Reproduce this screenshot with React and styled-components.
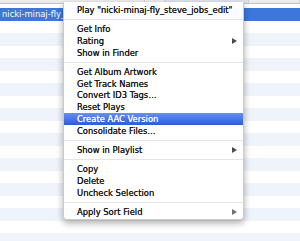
import styled, { createGlobalStyle } from 'styled-components'

const GlobalStyle = createGlobalStyle`
  html, body {
    margin: 0;
    padding: 0;
    background: #fff;
    overflow: hidden;
  }
  body {
    font-family: "DejaVu Sans", "Liberation Sans", sans-serif;
  }
`

const Page = styled.div`
  position: relative;
  width: 300px;
  height: 241px;
  overflow: hidden;
  background: #fff;
`

const Header = styled.div`
  display: flex;
  height: 17px;
  margin-top: -14px;
  background: linear-gradient(#ffffff, #e9e9e9);
  border-bottom: 1px solid #c4c4c4;
`

const HeaderCell = styled.div`
  width: ${props => props.w};
  flex: ${props => (props.grow ? 1 : 'none')};
  padding-left: ${props => props.pl || '2px'};
  font-size: 8.4px;
  line-height: 17px;
  color: #333;
  text-align: ${props => props.align || 'left'};
  padding-right: ${props => props.pr || '0'};
  border-right: 1px solid #cfcfcf;
  background: ${props => (props.sorted ? 'linear-gradient(#eef2f8, #d9e0ea)' : 'transparent')};
  box-sizing: border-box;
  white-space: nowrap;
  overflow: hidden;
`

const List = styled.div`
  padding-top: 4px;
`

const Row = styled.div`
  height: 12.5px;
  display: flex;
  align-items: center;
  padding-left: 2px;
  font-size: 8.4px;
  background: ${props =>
    props.selected ? '#3d77dc' : props.striped ? '#eff3fa' : '#fff'};
  color: ${props => (props.selected ? '#fff' : '#222')};
  white-space: nowrap;
  overflow: hidden;
`

const Menu = styled.div`
  position: absolute;
  left: 63px;
  top: 2px;
  width: 181px;
  box-sizing: border-box;
  padding: 2px 0 1px;
  background: rgba(255, 255, 255, 0.98);
  border: 1px solid #c9c9c9;
  border-top: none;
  border-radius: 0 0 4px 4px;
  box-shadow: 0 3px 7px rgba(0, 0, 0, 0.33);
`

const Item = styled.div`
  display: flex;
  align-items: center;
  justify-content: space-between;
  height: 11.8px;
  padding: 0 6px 0 13px;
  font-size: 8.4px;
  color: ${props => (props.active ? '#fff' : '#1a1a1a')};
  text-shadow: 0 0 0.25px ${props => (props.active ? '#fff' : '#1a1a1a')};
  background: ${props =>
    props.active ? 'linear-gradient(#6690f0, #2c5cda)' : 'transparent'};
  white-space: nowrap;
`

const Arrow = styled.span`
  width: 0;
  height: 0;
  border-top: 3px solid transparent;
  border-bottom: 3px solid transparent;
  border-left: 5px solid ${props => props.color || '#4a4a4a'};
`

const Separator = styled.div`
  height: 7.4px;
  display: flex;
  align-items: center;
  &::after {
    content: '';
    flex: 1;
    height: 1px;
    background: #e4e4e4;
  }
`

const menu = [
  { label: 'Play "nicki-minaj-fly_steve_jobs_edit"' },
  'sep',
  { label: 'Get Info' },
  { label: 'Rating', sub: true },
  { label: 'Show in Finder' },
  'sep',
  { label: 'Get Album Artwork' },
  { label: 'Get Track Names' },
  { label: 'Convert ID3 Tags…' },
  { label: 'Reset Plays' },
  { label: 'Create AAC Version', active: true },
  { label: 'Consolidate Files…' },
  'sep',
  { label: 'Show in Playlist', sub: true },
  'sep',
  { label: 'Copy' },
  { label: 'Delete' },
  { label: 'Uncheck Selection' },
  'sep',
  { label: 'Apply Sort Field', sub: true, light: true },
]

const App = () => {
  const rows = [...Array(19).keys()]

  return (
    <Page>
      <GlobalStyle />
      <Header>
        <HeaderCell w="145px">Name</HeaderCell>
        <HeaderCell w="20px" pl="0" pr="2px" align="right">Time</HeaderCell>
        <HeaderCell w="84px" sorted>Artist</HeaderCell>
        <HeaderCell grow>Genre</HeaderCell>
      </Header>
      <List>
        {rows.map(i => (
          <Row key={i} selected={i === 0} striped={i > 0 && i % 2 === 0}>
            {i === 0 ? 'nicki-minaj-fly_steve_jobs_edit' : ''}
          </Row>
        ))}
      </List>
      <Menu>
        {menu.map((m, i) =>
          m === 'sep' ? (
            <Separator key={i} />
          ) : (
            <Item key={i} active={m.active}>
              <span>{m.label}</span>
              {m.sub && <Arrow color={m.light ? '#707070' : '#4a4a4a'} />}
            </Item>
          )
        )}
      </Menu>
    </Page>
  )
}

export default App
